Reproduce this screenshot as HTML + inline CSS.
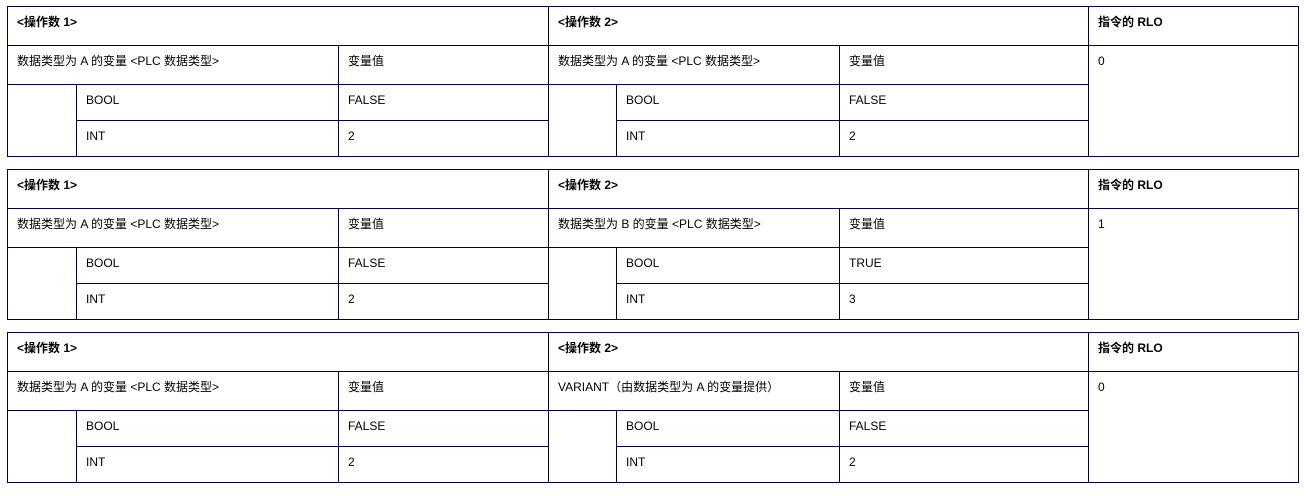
<!DOCTYPE html><html><head><meta charset="utf-8"><style>
body{margin:0;background:#fff;font-family:"Liberation Sans","Noto Sans CJK SC",sans-serif;font-size:12px;color:#000}
table{position:absolute;left:7px;border-collapse:collapse;table-layout:fixed;width:1291px}
td{border:1px solid #000040;vertical-align:top;padding:8px 0 0 9px;line-height:14px;box-sizing:border-box;white-space:nowrap;overflow:hidden}
tr.h td{height:39px}tr.s td{height:36px}
b{font-weight:bold}
</style></head><body>
<table style="top:6px"><colgroup><col style="width:69px"><col style="width:262px"><col style="width:210px"><col style="width:68px"><col style="width:223px"><col style="width:249px"><col style="width:210px"></colgroup>
<tr class="h"><td colspan="3"><b>&lt;操作数 1&gt;</b></td><td colspan="3"><b>&lt;操作数 2&gt;</b></td><td><b>指令的 RLO</b></td></tr>
<tr class="h"><td colspan="2">数据类型为 A 的变量 &lt;PLC 数据类型&gt;</td><td>变量值</td><td colspan="2">数据类型为 A 的变量 &lt;PLC 数据类型&gt;</td><td>变量值</td><td rowspan="3">0</td></tr>
<tr class="s"><td rowspan="2"></td><td>BOOL</td><td>FALSE</td><td rowspan="2"></td><td>BOOL</td><td>FALSE</td></tr>
<tr class="s"><td>INT</td><td>2</td><td>INT</td><td>2</td></tr>
</table>
<table style="top:169px"><colgroup><col style="width:69px"><col style="width:262px"><col style="width:210px"><col style="width:68px"><col style="width:223px"><col style="width:249px"><col style="width:210px"></colgroup>
<tr class="h"><td colspan="3"><b>&lt;操作数 1&gt;</b></td><td colspan="3"><b>&lt;操作数 2&gt;</b></td><td><b>指令的 RLO</b></td></tr>
<tr class="h"><td colspan="2">数据类型为 A 的变量 &lt;PLC 数据类型&gt;</td><td>变量值</td><td colspan="2">数据类型为 B 的变量 &lt;PLC 数据类型&gt;</td><td>变量值</td><td rowspan="3">1</td></tr>
<tr class="s"><td rowspan="2"></td><td>BOOL</td><td>FALSE</td><td rowspan="2"></td><td>BOOL</td><td>TRUE</td></tr>
<tr class="s"><td>INT</td><td>2</td><td>INT</td><td>3</td></tr>
</table>
<table style="top:332px"><colgroup><col style="width:69px"><col style="width:262px"><col style="width:210px"><col style="width:68px"><col style="width:223px"><col style="width:249px"><col style="width:210px"></colgroup>
<tr class="h"><td colspan="3"><b>&lt;操作数 1&gt;</b></td><td colspan="3"><b>&lt;操作数 2&gt;</b></td><td><b>指令的 RLO</b></td></tr>
<tr class="h"><td colspan="2">数据类型为 A 的变量 &lt;PLC 数据类型&gt;</td><td>变量值</td><td colspan="2">VARIANT（由数据类型为 A 的变量提供）</td><td>变量值</td><td rowspan="3">0</td></tr>
<tr class="s"><td rowspan="2"></td><td>BOOL</td><td>FALSE</td><td rowspan="2"></td><td>BOOL</td><td>FALSE</td></tr>
<tr class="s"><td>INT</td><td>2</td><td>INT</td><td>2</td></tr>
</table>
</body></html>
